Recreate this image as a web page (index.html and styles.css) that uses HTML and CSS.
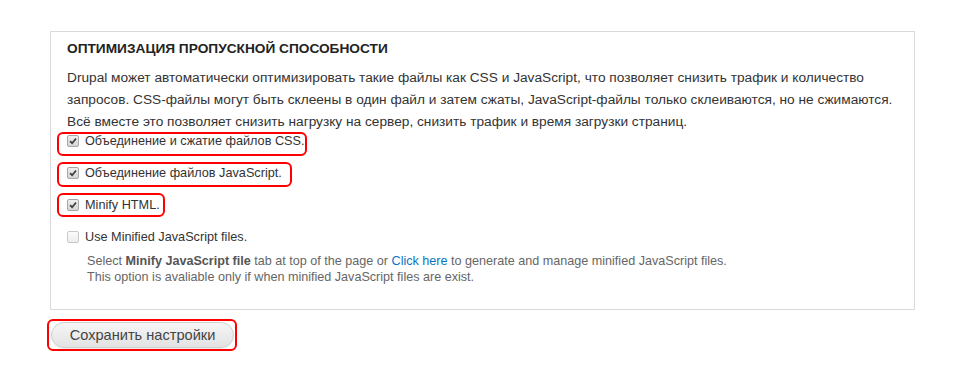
FILE: index.html
```html
<!DOCTYPE html>
<html lang="ru">
<head>
<meta charset="utf-8">
<link rel="stylesheet" href="styles.css">
</head>
<body>
<form class="page">
  <fieldset class="box">
    <h2 class="title">ОПТИМИЗАЦИЯ ПРОПУСКНОЙ СПОСОБНОСТИ</h2>
    <p class="desc">Drupal может автоматически оптимизировать такие файлы как CSS и JavaScript, что позволяет снизить трафик и количество запросов. CSS-файлы могут быть склеены в один файл и затем сжаты, JavaScript-файлы только склеиваются, но не сжимаются. Всё вместе это позволяет снизить нагрузку на сервер, снизить трафик и время загрузки страниц.</p>
    <div class="items">
      <div class="item mark w1"><span class="cb on"><svg viewBox="0 0 11 11"><path d="M2.3 5.6 L4.5 7.9 L8.8 2.9" fill="none" stroke="#3c3c3c" stroke-width="1.8"/></svg></span><span class="lbl">Объединение и сжатие файлов CSS.</span></div>
      <div class="item mark w2"><span class="cb on"><svg viewBox="0 0 11 11"><path d="M2.3 5.6 L4.5 7.9 L8.8 2.9" fill="none" stroke="#3c3c3c" stroke-width="1.8"/></svg></span><span class="lbl">Объединение файлов JavaScript.</span></div>
      <div class="item mark w3"><span class="cb on"><svg viewBox="0 0 11 11"><path d="M2.3 5.6 L4.5 7.9 L8.8 2.9" fill="none" stroke="#3c3c3c" stroke-width="1.8"/></svg></span><span class="lbl">Minify HTML.</span></div>
      <div class="item plain"><span class="cb off"></span><span class="lbl">Use Minified JavaScript files.</span></div>
      <div class="help">Select <b>Minify JavaScript file</b> tab at top of the page or <a href="#">Click here</a> to generate and manage minified JavaScript files.<br>This option is avaliable only if when minified JavaScript files are exist.</div>
    </div>
  </fieldset>
  <div class="actions">
    <span class="mark btnwrap"><button type="button" class="btn">Сохранить настройки</button></span>
  </div>
</form>
</body>
</html>
```
FILE: styles.css
```css
html, body {
  margin: 0;
  padding: 0;
  background: #fff;
}
body {
  font-family: "Liberation Sans", Arial, sans-serif;
  color: #333;
}
.page {
  padding: 31px 42px 0 50px;
}
.box {
  margin: 0;
  border: 1px solid #dadada;
  padding: 7px 16px 24px 16px;
  min-width: 0;
}
.title {
  margin: 0;
  font-size: 13.7px;
  font-weight: bold;
  color: #222;
  line-height: 20px;
}
.desc {
  margin: 8px 0 0 0;
  font-size: 13.7px;
  line-height: 22px;
  color: #333;
}
.items {
  display: flex;
  flex-direction: column;
  align-items: flex-start;
  margin: -1px 0 0 -10px;
}
.item {
  display: flex;
  align-items: center;
  font-size: 12.7px;
  line-height: 14px;
  color: #333;
  padding-left: 8px;
  box-sizing: border-box;
  flex: none;
}
.mark {
  border: 2px solid #f00;
  border-radius: 6px;
}
.w1 { width: 250px; padding-top: 0; padding-bottom: 6px; }
.w2 { width: 235px; margin-top: 6px; padding-top: 2px; padding-bottom: 5px; }
.w3 { width: 108px; margin-top: 6px; padding-top: 3px; padding-bottom: 3px; }
.plain { margin-top: 13px; padding-left: 10px; }
.cb {
  width: 10px;
  height: 10px;
  border: 1px solid #a6a6a6;
  border-radius: 2px;
  background: linear-gradient(#efefef, #d6d6d6);
  margin-right: 6px;
  display: inline-flex;
  flex: none;
}
.cb svg { width: 10px; height: 10px; }
.cb.off {
  border-color: #c9c9c9;
  background: linear-gradient(#fbfbfb, #ececec);
}
.help {
  margin: 10px 0 0 30px;
  font-size: 12.6px;
  line-height: 15.5px;
  color: #666;
}
.help b { color: #555; }
.help a { color: #0a74c4; text-decoration: none; }
.actions {
  padding: 9px 0 0 0;
  margin-left: -3px;
}
.btnwrap {
  display: inline-block;
  padding: 1px 1px 1px 2px;
}
.btn {
  display: block;
  font-family: "Liberation Sans", Arial, sans-serif;
  font-size: 14.6px;
  color: #444;
  height: 26px;
  width: 183px;
  padding: 0;
  border: 1px solid #d0d0d0;
  border-radius: 13px;
  background: linear-gradient(#f6f6f6, #e2e2e2);
  box-shadow: 0 1px 1px rgba(0,0,0,0.08);
}
```
